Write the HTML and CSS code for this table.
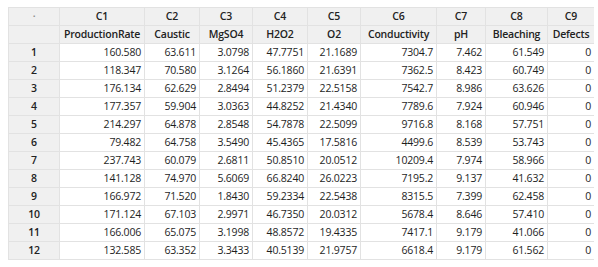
FILE: index.html
```html
<!DOCTYPE html>
<html lang="en">
<head>
    <meta charset="UTF-8">
    <title>Worksheet</title>
    <link rel="stylesheet" href="styles.css">
</head>
<body>
    <table class="sheet">
        <colgroup>
            <col class="c-idx"><col class="c-1"><col class="c-2"><col class="c-3"><col class="c-4">
            <col class="c-5"><col class="c-6"><col class="c-7"><col class="c-8"><col class="c-9">
        </colgroup>
        <thead>
            <tr class="col-ids">
                <th class="corner">&middot;</th>
                <th>C1</th><th>C2</th><th>C3</th><th>C4</th><th>C5</th><th>C6</th><th>C7</th><th>C8</th><th>C9</th>
            </tr>
            <tr class="col-names">
                <th class="corner"></th>
                <th>ProductionRate</th><th>Caustic</th><th>MgSO4</th><th>H2O2</th><th>O2</th>
                <th>Conductivity</th><th>pH</th><th>Bleaching</th><th>Defects</th>
            </tr>
        </thead>
        <tbody id="rows"></tbody>
    </table>

    <script>
        const data = [
            ['160.580', '63.611', '3.0798', '47.7751', '21.1689', '7304.7', '7.462', '61.549', '0'],
            ['118.347', '70.580', '3.1264', '56.1860', '21.6391', '7362.5', '8.423', '60.749', '0'],
            ['176.134', '62.629', '2.8494', '51.2379', '22.5158', '7542.7', '8.986', '63.626', '0'],
            ['177.357', '59.904', '3.0363', '44.8252', '21.4340', '7789.6', '7.924', '60.946', '0'],
            ['214.297', '64.878', '2.8548', '54.7878', '22.5099', '9716.8', '8.168', '57.751', '0'],
            ['79.482', '64.758', '3.5490', '45.4365', '17.5816', '4499.6', '8.539', '53.743', '0'],
            ['237.743', '60.079', '2.6811', '50.8510', '20.0512', '10209.4', '7.974', '58.966', '0'],
            ['141.128', '74.970', '5.6069', '66.8240', '26.0223', '7195.2', '9.137', '41.632', '0'],
            ['166.972', '71.520', '1.8430', '59.2334', '22.5438', '8315.5', '7.399', '62.458', '0'],
            ['171.124', '67.103', '2.9971', '46.7350', '20.0312', '5678.4', '8.646', '57.410', '0'],
            ['166.006', '65.075', '3.1998', '48.8572', '19.4335', '7417.1', '9.179', '41.066', '0'],
            ['132.585', '63.352', '3.3433', '40.5139', '21.9757', '6618.4', '9.179', '61.562', '0']
        ];

        const body = document.getElementById('rows');
        data.forEach(function (row, i) {
            const tr = document.createElement('tr');
            const th = document.createElement('th');
            th.className = 'row-num';
            th.textContent = i + 1;
            tr.appendChild(th);
            row.forEach(function (value) {
                const td = document.createElement('td');
                td.textContent = value;
                tr.appendChild(td);
            });
            body.appendChild(tr);
        });
    </script>
</body>
</html>
```

FILE: styles.css
```css
body {
    margin: 7px 4px 0 8px;
    background: #fff;
    font-family: 'Open Sans', 'Noto Sans', Arial, sans-serif;
    font-size: 10.5px;
    letter-spacing: -0.2px;
    color: #1e1e1e;
}
.sheet {
    border-collapse: collapse;
    table-layout: fixed;
    width: 586px;
}
.c-idx { width: 51px; }
.c-1 { width: 85px; }
.c-2 { width: 55px; }
.c-3 { width: 53px; }
.c-4 { width: 55px; }
.c-5 { width: 53px; }
.c-6 { width: 76px; }
.c-7 { width: 49px; }
.c-8 { width: 62px; }
.c-9 { width: 47px; }
th, td {
    height: 17px;
    padding: 0 3px;
    border: 1px solid #e2e2e2;
    white-space: nowrap;
    overflow: hidden;
    line-height: 17px;
}
th {
    background: #f0f0f0;
    font-weight: 600;
    text-align: center;
    color: #222;
}
.corner {
    color: #8a8a8a;
}
td {
    text-align: right;
    background: #fff;
}
.row-num {
    text-align: center;
}
```
